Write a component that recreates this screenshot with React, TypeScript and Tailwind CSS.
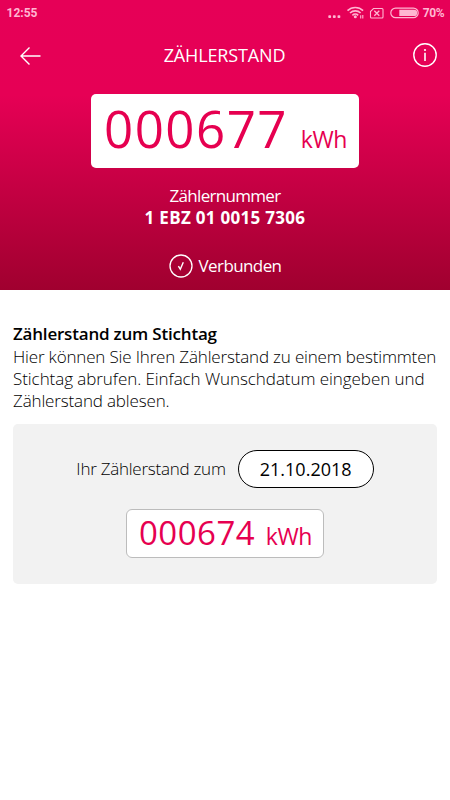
import React from "react";

function StatusBar() {
  return (
    <div className="flex h-[26px] items-center justify-between pl-[6.5px] pr-[6px] text-[#ffb6d2]">
      <span className="font-['Roboto',sans-serif] text-[12px] font-bold leading-[26px]">12:55</span>
      <div className="flex items-center">
        <svg width="93" height="26" viewBox="0 0 93 26" fill="none" stroke="currentColor">
          <g fill="currentColor" stroke="none">
            <rect x="1.3" y="15.2" width="2.8" height="2.8" rx=".8" />
            <rect x="5.9" y="15.2" width="2.8" height="2.8" rx=".8" />
            <rect x="10.5" y="15.2" width="2.8" height="2.8" rx=".8" />
            <circle cx="28.3" cy="16.8" r="1.5" />
          </g>
          <path d="M20.5 10.6a11.3 11.3 0 0 1 15.6 0M23 13a7.7 7.7 0 0 1 10.6 0M25.4 15.3a4.2 4.2 0 0 1 5.8 0" strokeWidth="1.6" />
          <path d="M33.7 15.2v3.4M35.8 15v3.4" strokeWidth="1.1" />
          <path d="M46.5 8.5H55a1 1 0 0 1 1 1v7.5a1 1 0 0 1-1 1H44.5a1 1 0 0 1-1-1v-5.5z" strokeWidth="1.1" />
          <path d="m47.3 10.7 5 5m0-5-5 5" strokeWidth="1.3" />
          <rect x="63.8" y="8.1" width="27.4" height="9.6" rx="4.8" strokeWidth="1.2" />
          <path d="M72.3 9.8h14.8a3.1 3.1 0 0 1 0 6.2H72.3z" fill="currentColor" stroke="none" />
        </svg>
        <span className="ml-[3px] font-['Roboto',sans-serif] text-[12px] font-bold leading-[26px] tracking-[-0.5px]">70%</span>
      </div>
    </div>
  );
}

function Header() {
  return (
    <header className="h-[290px] bg-[linear-gradient(to_bottom,#e60057_0px,#e60055_95px,#a0002f_290px)] text-white">
      <StatusBar />
      <div className="flex h-[58px] items-center justify-between pl-5 pr-[12px]">
        <svg width="22" height="20" viewBox="0 0 22 20" fill="none" stroke="currentColor" strokeWidth="1.4">
          <path d="M20.5 11H1M9.5 2.5 1 11l8.5 8.5" />
        </svg>
        <h1 className="mr-[5px] whitespace-nowrap text-[18px] font-normal leading-6 tracking-[-0.15px]">ZÄHLERSTAND</h1>
        <svg width="26" height="26" viewBox="0 0 26 26" fill="none" stroke="currentColor" strokeWidth="1.4">
          <circle cx="13" cy="13" r="11.2" />
          <path d="M13 10.8v8.3" strokeWidth="1.6" />
          <circle cx="13" cy="8" r="1.1" fill="currentColor" stroke="none" />
        </svg>
      </div>
      <div className="mx-auto mt-[10px] flex h-[73.5px] w-[268px] items-baseline justify-between rounded-[5px] bg-white pl-[13px] pr-[12px] text-[#e60050]">
        <span className="text-[51px] font-normal leading-[69px] tracking-[1.5px]">000677</span>
        <span className="text-[23px] font-normal tracking-[-0.4px]">kWh</span>
      </div>
      <div className="mt-[17.5px] text-center text-[17px] font-normal leading-[22px] tracking-[-0.7px]">Zählernummer</div>
      <div className="text-center text-[17px] font-bold leading-[22px] tracking-[0.3px]">1 EBZ 01 0015 7306</div>
      <div className="mt-[24px] flex h-[26px] items-center justify-center gap-[6px]">
        <svg width="24" height="24" viewBox="0 0 24 24" fill="none" stroke="currentColor" strokeWidth="1.3">
          <circle cx="12" cy="12" r="11" />
          <path d="m9.4 12.2 1.9 3L14.3 8.3" strokeWidth="1.4" />
        </svg>
        <span className="text-[17px] font-normal leading-[26px] tracking-[-0.6px]">Verbunden</span>
      </div>
    </header>
  );
}

function ReadingCard() {
  return (
    <section className="mt-[12px] h-[160px] rounded-[5px] bg-[#f2f2f2] pt-[26px]">
      <div className="flex items-center justify-center gap-3">
        <span className="whitespace-nowrap text-[17px] font-light tracking-[-0.25px]">Ihr Zählerstand zum</span>
        <div className="flex h-[38px] w-[136px] items-center justify-center rounded-full border border-black bg-white text-[18px] font-normal">
          21.10.2018
        </div>
      </div>
      <div className="mx-auto mt-[21px] flex h-[49px] w-[198px] items-baseline justify-between rounded-md border border-[#bcbcbc] bg-white pl-[12px] pr-[11px] text-[#e60050]">
        <span className="text-[33px] font-normal leading-[45px] tracking-[0.5px]">000674</span>
        <span className="text-[23px] font-normal tracking-[-0.4px]">kWh</span>
      </div>
    </section>
  );
}

export default function App() {
  return (
    <div className="h-[800px] w-[450px] overflow-hidden bg-white font-['Open_Sans','Noto_Sans',sans-serif] text-black">
      <Header />
      <main className="px-[13px] pt-[32px]">
        <h2 className="whitespace-nowrap text-[17px] font-semibold leading-6 tracking-[-0.2px]">Zählerstand zum Stichtag</h2>
        <p className="whitespace-nowrap text-[17px] font-light leading-[22px] tracking-[-0.15px]">
          <span className="tracking-[-0.17px]">Hier können Sie Ihren Zählerstand zu einem bestimmten</span>
          <br />
          <span className="tracking-[-0.06px]">Stichtag abrufen. Einfach Wunschdatum eingeben und</span>
          <br />
          Zählerstand ablesen.
        </p>
        <ReadingCard />
      </main>
    </div>
  );
}
